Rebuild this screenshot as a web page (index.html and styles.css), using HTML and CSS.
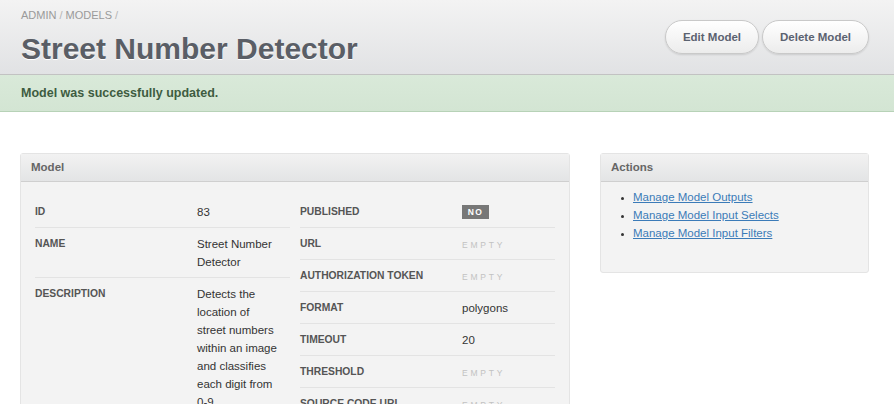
FILE: index.html
```html
<!DOCTYPE html>
<html lang="en">
<head>
<meta charset="utf-8">
<title>Street Number Detector</title>
<link rel="stylesheet" href="styles.css">
</head>
<body>
<header class="page-header">
  <div class="heading">
    <nav class="crumbs"><span>ADMIN</span><span class="sep">/</span><span>MODELS</span><span class="sep">/</span></nav>
    <h1 class="title">Street Number Detector</h1>
  </div>
  <div class="actions-bar">
    <a class="btn" href="#">Edit Model</a>
    <a class="btn" href="#">Delete Model</a>
  </div>
</header>
<div class="alert">Model was successfully updated.</div>
<main class="content">
  <section class="panel panel-main">
    <div class="panel-head">Model</div>
    <div class="panel-body details">
      <table class="dl">
        <tr><th>ID</th><td>83</td></tr>
        <tr><th>NAME</th><td>Street Number Detector</td></tr>
        <tr><th>DESCRIPTION</th><td>Detects the location of street numbers within an image and classifies each digit from 0-9</td></tr>
      </table>
      <table class="dl">
        <tr><th>PUBLISHED</th><td><span class="badge">NO</span></td></tr>
        <tr><th>URL</th><td><span class="empty">EMPTY</span></td></tr>
        <tr><th>AUTHORIZATION TOKEN</th><td><span class="empty">EMPTY</span></td></tr>
        <tr><th>FORMAT</th><td>polygons</td></tr>
        <tr><th>TIMEOUT</th><td>20</td></tr>
        <tr><th>THRESHOLD</th><td><span class="empty">EMPTY</span></td></tr>
        <tr><th>SOURCE CODE URL</th><td><span class="empty">EMPTY</span></td></tr>
      </table>
    </div>
  </section>
  <aside class="panel panel-side">
    <div class="panel-head">Actions</div>
    <div class="panel-body">
      <ul class="links">
        <li><a href="#">Manage Model Outputs</a></li>
        <li><a href="#">Manage Model Input Selects</a></li>
        <li><a href="#">Manage Model Input Filters</a></li>
      </ul>
    </div>
  </aside>
</main>
</body>
</html>
```
FILE: styles.css
```css
html, body {
  margin: 0;
  padding: 0;
  background: #ffffff;
  font-family: "Liberation Sans", Arial, sans-serif;
  color: #333333;
  overflow: hidden;
}

.page-header {
  display: flex;
  justify-content: space-between;
  align-items: flex-start;
  height: 74px;
  padding: 0 25px 0 21px;
  background: linear-gradient(#f3f3f3, #e1e2e4);
  border-bottom: 1px solid #c2c2c2;
}

.crumbs {
  margin-top: 8px;
  font-size: 11px;
  line-height: 14px;
  color: #9a9a9a;
}

.crumbs .sep {
  margin: 0 3px;
  color: #b5b5b5;
}

.title {
  margin: 9px 0 0;
  font-size: 30px;
  line-height: 36px;
  font-weight: bold;
  color: #5a5e66;
  text-shadow: 0 1px 0 #ffffff;
}

.actions-bar {
  display: flex;
  gap: 3px;
  margin-top: 20px;
}

.btn {
  display: block;
  height: 32px;
  line-height: 32px;
  padding: 0 17px;
  border: 1px solid #c9c9c9;
  border-radius: 17px;
  background: linear-gradient(#ffffff, #ececec);
  box-shadow: 0 1px 2px rgba(0, 0, 0, 0.12);
  font-size: 11.5px;
  font-weight: bold;
  color: #5b6270;
  text-decoration: none;
}

.alert {
  height: 36px;
  line-height: 36px;
  padding-left: 21px;
  background: linear-gradient(#d9e9d9, #d3e5d3);
  border-bottom: 1px solid #b7d2b7;
  font-size: 12.5px;
  font-weight: bold;
  color: #3e5c41;
}

.content {
  display: grid;
  grid-template-columns: 550px 269px;
  gap: 30px;
  align-items: start;
  margin: 41px 0 0 20px;
}

.panel {
  background: #f3f3f3;
  border: 1px solid #e4e4e4;
  border-radius: 3px;
}

.panel-head {
  height: 27px;
  line-height: 27px;
  padding-left: 10px;
  background: linear-gradient(#f2f2f2, #e3e4e5);
  border-bottom: 1px solid #cfcfcf;
  font-size: 11.5px;
  font-weight: bold;
  color: #666666;
}

.details {
  display: grid;
  grid-template-columns: 255px 255px;
  gap: 10px;
  align-items: start;
  padding: 14px 14px 20px;
}

.dl {
  width: 255px;
  border-collapse: collapse;
  table-layout: fixed;
}

.dl th {
  width: 162px;
  padding: 7px 0 6px;
  text-align: left;
  vertical-align: top;
  font-size: 10.3px;
  line-height: 18px;
  font-weight: bold;
  color: #555555;
}

.dl td {
  padding: 7px 11px 6px 0;
  vertical-align: top;
  font-size: 11.5px;
  line-height: 18px;
  color: #333333;
}

.dl tr + tr th,
.dl tr + tr td {
  border-top: 1px solid #e3e3e3;
}

.badge {
  display: inline-block;
  width: 27px;
  height: 14px;
  line-height: 14px;
  margin-top: 2px;
  background: #777777;
  color: #ffffff;
  font-size: 8.5px;
  font-weight: bold;
  letter-spacing: 1.5px;
  text-align: center;
  vertical-align: top;
}

.empty {
  display: inline-block;
  height: 18px;
  line-height: 20px;
  font-size: 8.5px;
  letter-spacing: 2.8px;
  color: #c2c2c2;
  vertical-align: top;
}

.links {
  margin: 0;
  padding: 6px 0 30px 32px;
  font-size: 11.5px;
  line-height: 18px;
}

.links li::marker {
  font-size: 9px;
  color: #333333;
}

.links a {
  color: #3b7bb8;
  text-decoration: underline;
}
```
